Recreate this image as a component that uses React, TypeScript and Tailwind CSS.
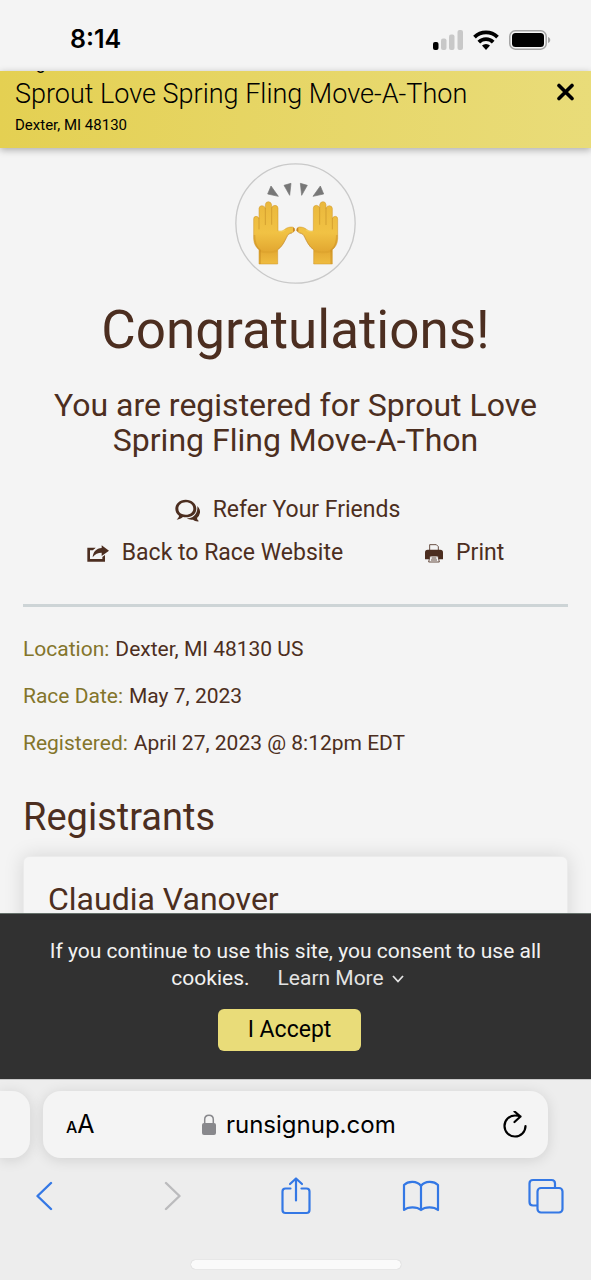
import type { ReactNode } from "react";

interface Detail {
  label: string;
  value: string;
}

const details: Detail[] = [
  { label: "Location:", value: "Dexter, MI 48130 US" },
  { label: "Race Date:", value: "May 7, 2023" },
  { label: "Registered:", value: "April 27, 2023 @ 8:12pm EDT" },
];

function StatusBar() {
  return (
    <div className="flex h-[71px] items-center justify-between bg-[#f4f4f4] pl-[70px] pr-10 pt-2 font-['Inter',sans-serif]">
      <span className="text-[25px] font-semibold text-black">8:14</span>
      <div className="flex items-center gap-[10px]">
        {/* Signal */}
        <svg width="30" height="20" viewBox="0 0 30 20" aria-hidden="true">
          <rect x="0" y="12" width="5.500" height="8" rx="2" fill="#000" />
          <rect x="8" y="8.500" width="5.500" height="11.500" rx="2" fill="#c8c8c8" />
          <rect x="16" y="4.500" width="5.500" height="15.500" rx="2" fill="#c8c8c8" />
          <rect x="24.500" y="0" width="5.500" height="20" rx="2" fill="#c8c8c8" />
        </svg>
        {/* Wifi */}
        <svg width="26" height="20" viewBox="0 0 26 20" fill="none" stroke="#000" strokeWidth="3.8" aria-hidden="true">
          <path d="M1.5 7.2a16.3 16.3 0 0 1 23 0" />
          <path d="M5.8 12.2a10.2 10.2 0 0 1 14.400 0" />
          <path d="M9 15.600a5.700 5.700 0 0 1 8 0L13 20Z" fill="#000" stroke="none" />
        </svg>
        {/* Battery */}
        <svg width="42" height="20" viewBox="0 0 42 20" aria-hidden="true">
          <rect x="0.8" y="0.8" width="36.4" height="18.4" rx="5.5" fill="none" stroke="#a3a3a3" strokeWidth="1.5" />
          <rect x="3" y="3" width="32" height="14" rx="3.5" fill="#000" />
          <path d="M39 7c3 1 3 5 0 6Z" fill="#a3a3a3" />
        </svg>
      </div>
    </div>
  );
}

function RaceHeader() {
  return (
    <header className="relative flex items-start justify-between bg-linear-to-r from-[#e4d052] to-[#e9dc79] pb-[13px] pl-[15px] pr-4 text-black shadow-[0_2px_7px_rgba(0,0,0,0.3)]">
      <div>
        <div className="flex h-[2px] items-end overflow-hidden text-lg leading-5">Registered</div>
        <p className="mt-[5px] text-[27px] font-light leading-8">Sprout Love Spring Fling Move-A-Thon</p>
        <p className="mt-[5px] text-[15px] leading-5">Dexter, MI 48130</p>
      </div>
      <button type="button" aria-label="Close" className="mt-3 cursor-pointer">
        <svg width="19" height="18" viewBox="0 0 19 18" stroke="#000" strokeWidth="3.6" strokeLinecap="round">
          <path d="M3 2.500 16 15.500M16 2.500 3 15.500" />
        </svg>
      </button>
    </header>
  );
}

function Hand() {
  return (
    <g>
      <path
        d="M102 327V284C93 277 87 267 86 252V192Q86 184 93 184Q101 184 102 192V160Q103 152 111 152Q119 152 121 160V149Q122 140 130 140Q138 140 140 149V159Q142 151 150 151Q158 151 159 159V228C167 230 172 229 178 224C186 217 194 216 202 216Q210 219 209 226Q207 233 198 234C191 235 188 239 184 247C178 260 170 277 158 284V327Z"
        fill="url(#skin)"
        stroke="#cf9527"
        strokeWidth="1.5"
      />
      <path d="M102 192V222M121 160V209M140 159V208" fill="none" stroke="#cf9a2c" strokeWidth="2.5" strokeLinecap="round" />
      <path d="M103 284Q130 293 157 284V291Q130 299 103 291Z" fill="#d69a28" opacity="0.4" />
      <path d="M86 240C87 268 96 281 103 285V327H108V284C97 277 91 262 91 240Z" fill="#bd7e1b" opacity="0.35" />
      <path d="M159 228C167 231 174 230 181 224" fill="none" stroke="#f8d45d" strokeWidth="4" opacity="0.7" />
      <path d="M158 284C171 276 179 259 185 247C189 238 192 236 201 234" fill="none" stroke="#c18320" strokeWidth="3" opacity="0.5" />
      <path d="M204 217Q210 219 209 226Q208 230 204 231Z" fill="#c88529" />
    </g>
  );
}

function RaisedHands() {
  return (
    <svg width="121" height="121" viewBox="30 24 363 363" role="img" aria-label="Raised hands">
      <defs>
        <linearGradient id="skin" x1="0" y1="0" x2="0" y2="1">
          <stop offset="0" stopColor="#eab83c" />
          <stop offset="0.5" stopColor="#f1c244" />
          <stop offset="0.78" stopColor="#e3a932" />
          <stop offset="1" stopColor="#efbc40" />
        </linearGradient>
      </defs>
      <circle cx="211.5" cy="205.5" r="179" fill="none" stroke="#c9c9c9" strokeWidth="4" />
      <Hand />
      <g transform="translate(424 0) scale(-1 1)">
        <Hand />
      </g>
      <g fill="#777" stroke="#777" strokeWidth="2" strokeLinejoin="round">
        <path d="M138 93 160 124 128 117Z" />
        <path d="M177 91 198 85 194 121Z" />
        <path d="M226 85 247 91 230 121Z" />
        <path d="M286 93 296 117 264 124Z" />
      </g>
    </svg>
  );
}

function ChatIcon() {
  return (
    <svg width="25" height="23" viewBox="346 50 75 69" fill="#4c2e20" aria-hidden="true">
      <path
        fillRule="evenodd"
        d="M378 52C397 52 410 64 410 79C410 94 397 105 378 105Q374 105 370 104C364 109 360 111 351 112C356 106 358 104 358 100C351 95 347 87 347 79C347 64 360 52 378 52ZM378 60C365 60 356 69 356 79C356 87 360 92 367 95Q373 97 378 97C392 97 401 89 401 79C401 68 392 60 378 60Z"
      />
      <path d="M413 71C419 77 422 84 421 91Q419 101 412 107Q412 112 418 117C409 118 405 115 400 112C394 113 387 112 382 108C400 108 415 96 413 71Z" />
    </svg>
  );
}

function ShareIcon() {
  return (
    <svg width="22" height="18" viewBox="80 187 66 54" fill="#4c2e20" aria-hidden="true">
      <path d="M81 195H106C102 199 99 201 97 203H89V229H126V223L134 217V237H81Z" />
      <path d="M124 188 146 204 124 220V210C113 210 104 214 97 224C98 208 108 197 124 196Z" />
    </svg>
  );
}

function PrintIcon() {
  return (
    <svg width="18" height="19" viewBox="1088 185 54 57" aria-hidden="true">
      <path d="M1102 208V187H1122L1128 193V208" fill="#f4f4f4" stroke="#4c2e20" strokeWidth="2.500" />
      <path d="M1088 210Q1088 202 1096 202H1134Q1142 202 1142 210V231H1088Z" fill="#4c2e20" />
      <path d="M1103 221H1127L1131 239H1099Z" fill="#f4f4f4" stroke="#4c2e20" strokeWidth="2.500" />
      <path d="M1108 227H1122M1106 233H1124" stroke="#4c2e20" strokeWidth="2.500" />
    </svg>
  );
}

function ActionLink({ icon, children }: { icon: ReactNode; children: ReactNode }) {
  return (
    <a href="#" className="flex h-[43px] items-center gap-[13px] text-[23px]">
      {icon}
      {children}
    </a>
  );
}

function CookieBanner() {
  return (
    <section className="relative border-t border-[#65706a] bg-[#313131] px-10 pb-7 pt-6 text-center text-[#f2f2f2]">
      <div className="text-[21px] leading-[27px]">
        <span>If you continue to use this site, you consent to use all cookies.</span>
        <button type="button" className="ml-7 mr-4 cursor-pointer leading-[27px] text-[#e3e3e3]">
          Learn More
          <svg className="ml-2 inline-block" width="12" height="8" viewBox="0 0 12 8" fill="none" stroke="currentColor" strokeWidth="1.8" aria-hidden="true">
            <path d="M1 1 6 6.5 11 1" />
          </svg>
        </button>
      </div>
      <button
        type="button"
        className="mr-3 mt-[17px] h-[42px] cursor-pointer rounded-md bg-[#e9dc79] px-[30px] text-[23px] leading-7 text-black"
      >
        I Accept
      </button>
    </section>
  );
}

function BrowserBar() {
  return (
    <footer className="relative overflow-hidden border-t border-[#c9c9c9] bg-[#ededed] pb-3 pt-[11px] font-['Inter',sans-serif]">
      <div className="flex gap-[13px]">
        <div className="h-[67px] w-[30px] rounded-r-[18px] bg-[#f4f4f4] shadow-[0_2px_14px_rgba(0,0,0,0.12)]" />
        <div className="mr-[43px] flex h-[67px] flex-1 items-center justify-between rounded-[18px] bg-[#f4f4f4] pl-[23px] pr-[21px] text-black shadow-[0_2px_14px_rgba(0,0,0,0.12)]">
          <button type="button" aria-label="Page settings" className="flex cursor-pointer items-baseline">
            <span className="text-base font-medium">A</span>
            <span className="text-[25px]">A</span>
          </button>
          <div className="flex items-center gap-[10px]">
            <svg width="14" height="21" viewBox="0 0 14 21" aria-hidden="true">
              <path d="M2.7 10V5.5C2.7-.3 11.3-.3 11.3 5.5V10" fill="none" stroke="#88888c" strokeWidth="1.5" />
              <rect x="0" y="9" width="14" height="12" rx="2" fill="#88888c" />
            </svg>
            <span className="text-2xl">runsignup.com</span>
          </div>
          <button type="button" aria-label="Reload" className="cursor-pointer">
            <svg width="24" height="28" viewBox="0 0 24 28" fill="none" stroke="#000" strokeWidth="2.200" strokeLinecap="round" strokeLinejoin="round">
              <path d="M22.500 15A10.500 10.500 0 1 1 12 4.500Q15 4.500 17.500 5.500M11.500 0.500 17.500 5.500 11.500 11" />
            </svg>
          </button>
        </div>
      </div>
      <nav className="-mx-[17px] mt-[19px] grid grid-cols-5 justify-items-center text-[#3478e5]">
        <button type="button" aria-label="Back" className="cursor-pointer">
          <svg width="20" height="38" viewBox="0 0 20 38" fill="none" stroke="currentColor" strokeWidth="2.4" strokeLinecap="round" strokeLinejoin="round">
            <path d="M15 6 1.500 19 15 32" />
          </svg>
        </button>
        <button type="button" aria-label="Forward" disabled className="text-[#bbbbbd]">
          <svg width="20" height="38" viewBox="0 0 20 38" fill="none" stroke="currentColor" strokeWidth="2.4" strokeLinecap="round" strokeLinejoin="round">
            <path d="M5 6 18.500 19 5 32" />
          </svg>
        </button>
        <button type="button" aria-label="Share" className="cursor-pointer">
          <svg width="30" height="38" viewBox="0 0 30 38" fill="none" stroke="currentColor" strokeWidth="2.200" strokeLinecap="round" strokeLinejoin="round">
            <path d="M9.500 11.500H4.500Q1.500 11.500 1.500 14.500V33Q1.500 36 4.500 36H25.500Q28.500 36 28.500 33V14.500Q28.500 11.500 25.500 11.500H20.500M15 23.500V1.500M9 7l6-5.500L21 7" />
          </svg>
        </button>
        <button type="button" aria-label="Bookmarks" className="cursor-pointer">
          <svg width="38" height="38" viewBox="0 0 38 38" fill="none" stroke="currentColor" strokeWidth="2.200" strokeLinejoin="round">
            <path d="M19 9C15 3.500 6 4 2 8V33C6 29.500 15 29.500 19 33C23 29.500 32 29.500 36 33V8C32 4 23 3.500 19 9ZM19 9V33" />
          </svg>
        </button>
        <button type="button" aria-label="Tabs" className="cursor-pointer">
          <svg width="36" height="38" viewBox="0 0 36 38" fill="none" stroke="currentColor" strokeWidth="2.200" strokeLinejoin="round">
            <path d="M9.500 28.500H5Q1.500 28.500 1.500 25V6.500Q1.500 3 5 3H23.500Q27 3 27 6.500V10.500" />
            <rect x="9.500" y="11" width="25" height="24.500" rx="3.500" />
          </svg>
        </button>
      </nav>
      <div className="mx-auto mt-[45px] h-[9px] w-[210px] rounded-full bg-[#fafafa] shadow-[0_0_1px_rgba(0,0,0,0.25)]" />
    </footer>
  );
}

export default function App() {
  return (
    <div className="overflow-hidden bg-[#f4f4f4] font-['Roboto',sans-serif] text-[#4c2e20]">
      <StatusBar />
      <RaceHeader />

      <main className="-mb-5 px-[23px] pt-[15px]">
        <div className="flex flex-col items-center text-center">
          <RaisedHands />
          <h1 className="mt-[14px] text-[53px] leading-[64px]">Congratulations!</h1>
          <h2 className="mt-[26px] text-[32px] leading-[35px]">
            You are registered for Sprout Love Spring Fling Move-A-Thon
          </h2>
        </div>

        <div className="mt-[31px] flex flex-wrap justify-center gap-x-[82px] px-8">
          <div className="flex w-full justify-center pr-4">
            <ActionLink icon={<ChatIcon />}>Refer Your Friends</ActionLink>
          </div>
          <ActionLink icon={<ShareIcon />}>Back to Race Website</ActionLink>
          <ActionLink icon={<PrintIcon />}>Print</ActionLink>
        </div>

        <hr className="mt-[29px] border-t-[3px] border-[#cdd4d6]" />

        <dl className="mt-7 flex flex-col gap-[19px] text-[21px] leading-7">
          {details.map((detail) => (
            <div key={detail.label} className="flex gap-[6px]">
              <dt className="text-[#83752b]">{detail.label}</dt>
              <dd>{detail.value}</dd>
            </div>
          ))}
        </dl>

        <h2 className="mt-9 text-[38px] leading-[48px]">Registrants</h2>
        <div className="mt-[15px] rounded-md border border-[#ebebeb] bg-[#f5f5f5] px-6 pb-[13px] pt-[22px] shadow-[0_0_20px_rgba(0,0,0,0.13)]">
          <h3 className="text-[32px] leading-10">Claudia Vanover</h3>
        </div>
      </main>

      <CookieBanner />
      <BrowserBar />
    </div>
  );
}
